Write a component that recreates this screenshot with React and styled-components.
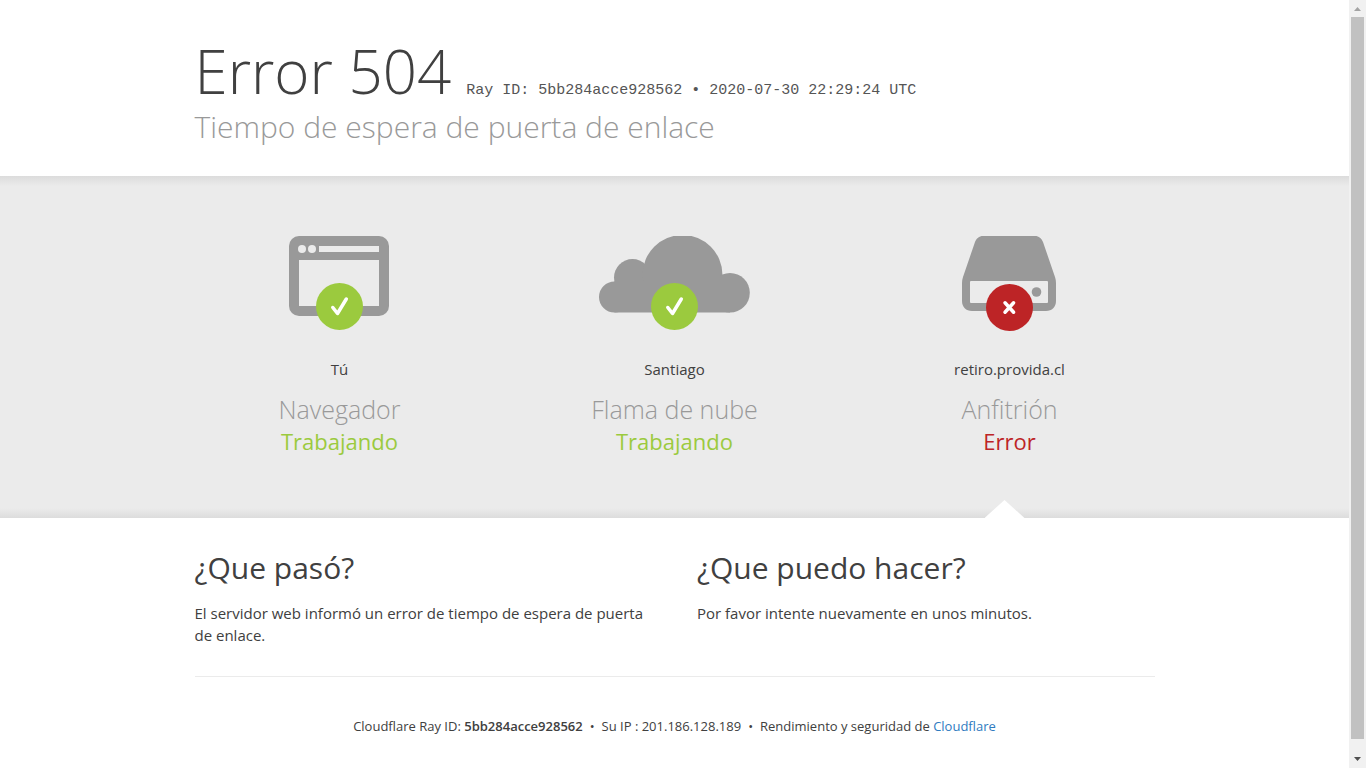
import React from 'react';
import styled, { createGlobalStyle } from 'styled-components';

const GlobalStyle = createGlobalStyle`
  * {
    box-sizing: border-box;
  }

  body {
    margin: 0;
    background: #fff;
    color: #404040;
    font-family: "Open Sans", "Liberation Sans", sans-serif;
    font-size: 15px;
    line-height: 22px;
  }

  h1, h2, h3, p {
    margin: 0;
    font-weight: 400;
  }
`;

const Page = styled.div`
  display: grid;
  grid-template-columns: minmax(0, 1fr) 17px;
  min-height: 100vh;
`;

const Wrapper = styled.div`
  width: 100%;
  max-width: 960px;
  margin: 0 auto;
`;

const Header = styled.header`
  padding: 35px 0 29px;
`;

const TitleRow = styled.div`
  display: flex;
  flex-wrap: wrap;
  align-items: baseline;
  gap: 0 15px;
`;

const Title = styled.h1`
  && {
    font-size: 60px;
    font-weight: 300;
  }
  line-height: 72px;
`;

const RayId = styled.span`
  color: #555;
  font-family: "Liberation Mono", monospace;
`;

const Subtitle = styled.h2`
  && {
    font-weight: 300;
  }
  color: #999;
  font-size: 30px;
  line-height: 40px;
`;

const Diagnostics = styled.section`
  padding: 60px 0 61px;
  background:
    linear-gradient(to bottom, #dcdcdc, rgba(235, 235, 235, 0)) top / 100% 10px no-repeat,
    linear-gradient(to top, #dcdcdc, rgba(235, 235, 235, 0)) bottom / 100% 10px no-repeat,
    #ebebeb;
`;

const Columns = styled.div`
  display: grid;
  grid-template-columns: repeat(${({ $count }) => $count}, minmax(0, 1fr));
  column-gap: 45px;
`;

const Status = styled.div`
  position: relative;
  display: flex;
  flex-direction: column;
  align-items: center;
  text-align: center;
`;

const IconArea = styled.div`
  position: relative;
  display: flex;
  justify-content: center;
  width: 100%;
  height: 95px;
  margin-bottom: 27px;
  padding-right: 1px;
`;

const Badge = styled.svg`
  position: absolute;
  bottom: 0;
  left: calc(50% - 24px);
`;

const Place = styled.span`
  margin-bottom: 13px;
`;

const Role = styled.h3`
  && {
    font-weight: 300;
  }
  color: #999;
  font-size: 25px;
  line-height: 32px;
`;

const State = styled.span`
  color: ${({ $error }) => ($error ? '#bd2426' : '#9bca3e')};
  font-size: 22px;
  line-height: 32px;
`;

const Arrow = styled.div`
  position: absolute;
  bottom: -61px;
  left: calc(50% - 25px);
  width: 40px;
  height: 18px;
  background: #fff;
  clip-path: polygon(50% 0, 100% 100%, 0 100%);
`;

const Details = styled(Columns)`
  padding: 30px 0;
`;

const Question = styled.h2`
  margin-bottom: 14px;
  font-size: 30px;
  line-height: 40px;
`;

const Footer = styled.footer`
  padding: 38px 0 30px;
  border-top: 1px solid #ebebeb;
  font-size: 13px;
  text-align: center;
`;

const Dot = styled.span`
  margin: 0 7px;
`;

const Strong = styled.strong`
  font-weight: 600;
`;

const Link = styled.a`
  color: #2f7bbf;
  text-decoration: none;
`;

const Scrollbar = styled.div`
  display: flex;
  flex-direction: column;
  align-items: center;
  background: #f1f1f1;
`;

const ScrollArrow = styled.svg`
  flex: none;
  width: 17px;
  height: 17px;
`;

const Thumb = styled.div`
  flex: 1;
  width: 13px;
  margin-bottom: 12px;
  background: #c1c1c1;
`;

const BrowserIcon = () => (
  <svg width="100" height="80" viewBox="0 0 100 80" aria-hidden="true">
    <rect width="100" height="80" rx="10" fill="#999" />
    <circle cx="13" cy="13" r="4" fill="#ebebeb" />
    <circle cx="23" cy="13" r="4" fill="#ebebeb" />
    <path d="M30 10h60v6H30zM10 24h80v46H10z" fill="#ebebeb" />
  </svg>
);

const CloudIcon = () => (
  <svg width="151" height="77" viewBox="0 0 151 77" fill="#999" aria-hidden="true">
    <circle cx="15.5" cy="61" r="15.5" />
    <circle cx="33.5" cy="41.5" r="18.5" />
    <circle cx="83.5" cy="39" r="40" />
    <circle cx="131" cy="56.8" r="19.8" />
    <path d="M15.5 45H131v31.5H15.5z" />
  </svg>
);

const ServerIcon = () => (
  <svg width="94" height="75" viewBox="0 0 94 75" aria-hidden="true">
    <path
      d="M21 0h52c4 0 6.5 2.5 8 6l12 35c.7 2 1 4 1 6v18c0 6-4 10-10 10H10C4 75 0 71 0 65V47c0-2 .3-4 1-6L13 6c1.5-3.5 4-6 8-6z"
      fill="#999"
    />
    <rect x="8" y="45" width="78" height="22" rx="1" fill="#ebebeb" />
    <circle cx="74.5" cy="56" r="4.8" fill="#999" />
  </svg>
);

const OkBadge = () => (
  <Badge width="47" height="48" viewBox="0 0 47 48" role="img" aria-label="OK">
    <circle cx="23.5" cy="23.5" r="23.5" fill="#9bca3e" />
    <path
      d="M16.8 24.5l4.7 6L30.3 16"
      fill="none"
      stroke="#fff"
      strokeWidth="3.5"
      strokeLinecap="round"
      strokeLinejoin="round"
    />
  </Badge>
);

const ErrorBadge = () => (
  <Badge width="47" height="47" viewBox="0 0 47 47" role="img" aria-label="Error">
    <circle cx="23.5" cy="23.5" r="23.5" fill="#bd2426" />
    <path
      d="M19 18.8l8.6 9.4M27.6 18.8L19 28.2"
      fill="none"
      stroke="#fff"
      strokeWidth="3.5"
      strokeLinecap="round"
    />
  </Badge>
);

const STATUSES = [
  { icon: BrowserIcon, place: 'Tú', role: 'Navegador', state: 'Trabajando' },
  { icon: CloudIcon, place: 'Santiago', role: 'Flama de nube', state: 'Trabajando' },
  { icon: ServerIcon, place: 'retiro.provida.cl', role: 'Anfitrión', state: 'Error', error: true },
];

const App = () => (
  <>
    <GlobalStyle />
    <Page>
      <div>
        <Header>
          <Wrapper>
            <TitleRow>
              <Title>Error 504</Title>
              <RayId>Ray ID: 5bb284acce928562 • 2020-07-30 22:29:24 UTC</RayId>
            </TitleRow>
            <Subtitle>Tiempo de espera de puerta de enlace</Subtitle>
          </Wrapper>
        </Header>
        <Diagnostics>
          <Wrapper>
            <Columns $count={3}>
              {STATUSES.map(({ icon: Icon, place, role, state, error }) => (
                <Status key={role}>
                  <IconArea>
                    <Icon />
                    {error ? <ErrorBadge /> : <OkBadge />}
                  </IconArea>
                  <Place>{place}</Place>
                  <Role>{role}</Role>
                  <State $error={error}>{state}</State>
                  {error && <Arrow />}
                </Status>
              ))}
            </Columns>
          </Wrapper>
        </Diagnostics>
        <Wrapper>
          <Details $count={2}>
            <div>
              <Question>¿Que pasó?</Question>
              <p>El servidor web informó un error de tiempo de espera de puerta de enlace.</p>
            </div>
            <div>
              <Question>¿Que puedo hacer?</Question>
              <p>Por favor intente nuevamente en unos minutos.</p>
            </div>
          </Details>
          <Footer>
            Cloudflare Ray ID: <Strong>5bb284acce928562</Strong>
            <Dot>•</Dot>
            Su IP : 201.186.128.189
            <Dot>•</Dot>
            Rendimiento y seguridad de <Link href="#cloudflare">Cloudflare</Link>
          </Footer>
        </Wrapper>
      </div>
      <Scrollbar aria-hidden="true">
        <ScrollArrow viewBox="0 0 17 17">
          <path d="M5 11l3.5-4 3.5 4z" fill="#a3a3a3" />
        </ScrollArrow>
        <Thumb />
        <ScrollArrow viewBox="0 0 17 17">
          <path d="M5 6l3.5 4L12 6z" fill="#505050" />
        </ScrollArrow>
      </Scrollbar>
    </Page>
  </>
);

export default App;
